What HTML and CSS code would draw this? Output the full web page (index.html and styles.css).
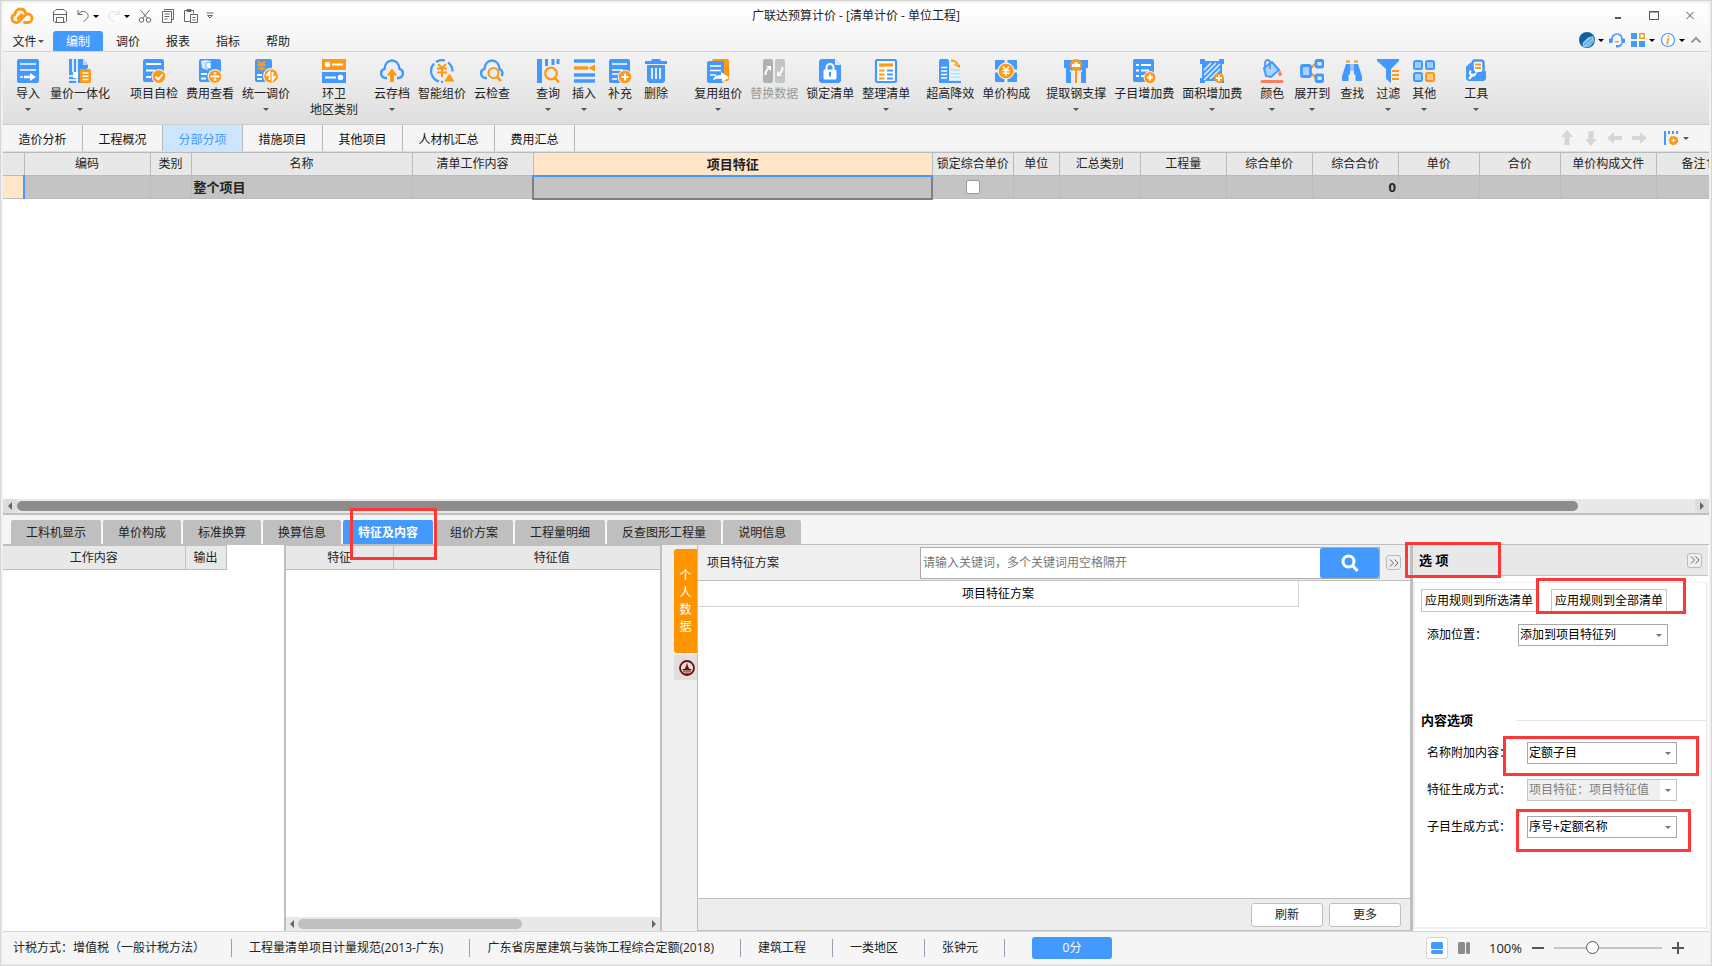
FILE: index.html
```html
<!DOCTYPE html>
<html lang="zh-CN">
<head>
<meta charset="utf-8">
<title>广联达预算计价 - [清单计价 - 单位工程]</title>
<link rel="stylesheet" href="styles.css">
</head>
<body>
<div class="window">
  <header class="top">
    <div class="titlebar">
      <div class="quick">
        <svg class="logo" viewBox="0 0 24 18"><path d="M15.500 5.500C14.500 3 12.500 2 10.500 2 7.500 2 5.200 4.200 5 7.300 3 7.800 2 9.300 2 11.200c0 2.500 1.700 4.300 4.200 4.300 1.600 0 2.500-.6 3.500-1.700l5-5.300c1-1 1.900-1.500 3.200-1.500 2.300 0 4.100 1.900 4.100 4.200s-1.800 4.300-4.300 4.300h-3.200M8 11.500l3.500-3.700" fill="none" stroke="#ff9913" stroke-width="2.900" stroke-linecap="round"/></svg>
        <button class="tool save" aria-label="保存"><svg viewBox="0 0 16 16"><path d="M4 1.500h8l2.500 2.500v9l-1.500 1.500H3L1.500 13V4zM2 6.500h12M4.500 14v-4.500h7V14"/></svg></button>
        <button class="tool undo" aria-label="撤销"><svg viewBox="0 0 16 16"><path d="M3 2v4.500h4.500M3 6.500C5 3.500 9 2.500 11.500 4.500s2 6-1 7.500l-2 1.500"/></svg><i class="caret dark"></i></button>
        <button class="tool redo" aria-label="重做"><svg viewBox="0 0 16 16"><path d="M13 2v4.500H8.500M13 6.500C11 3.500 7 2.500 4.500 4.500s-2 6 1 7.500l2 1.500"/></svg><i class="caret dark"></i></button>
        <button class="tool" aria-label="剪切"><svg viewBox="0 0 16 16"><path d="M3.500 2l7 8.500M12.500 2l-7 8.500"/><circle cx="4.500" cy="12" r="2.300"/><circle cx="11.500" cy="12" r="2.300"/></svg></button>
        <button class="tool" aria-label="复制"><svg viewBox="0 0 16 16"><path d="M4.500 2.500V1.500h9v10h-2M2.500 3.500h9v11h-9zM4.500 6h5M4.500 8.500h5M4.500 11h3"/></svg></button>
        <button class="tool" aria-label="粘贴"><svg viewBox="0 0 16 16"><path d="M7 13.500H1.500v-11h9v3M4 3.500v-2h4v2zM7.500 6.500h7v8h-7zM9.500 9.500h3M9.500 12h3"/></svg></button>
        <button class="tool more" aria-label="自定义"><svg viewBox="0 0 8 8"><path d="M.5 1h7M1.500 3.500h5L4 6z"/></svg></button>
      </div>
      <h1 class="title">广联达预算计价 - [清单计价 - 单位工程]</h1>
      <div class="winctl">
        <button aria-label="最小化"><svg viewBox="0 0 12 12"><path d="M3 8h6" stroke-width="2"/></svg></button>
        <button aria-label="最大化"><svg viewBox="0 0 12 12"><path d="M1.500 1.500h9v8h-9zM1.500 2h9"/></svg></button>
        <button aria-label="关闭"><svg viewBox="0 0 12 12"><path d="M2.500 2l7 7M9.500 2l-7 7"/></svg></button>
      </div>
    </div>
    <div class="menubar">
      <nav class="menus">
        <button>文件<i class="caret"></i></button>
        <button class="active">编制</button>
        <button>调价</button>
        <button>报表</button>
        <button>指标</button>
        <button>帮助</button>
      </nav>
      <div class="helpers">
        <button aria-label="账号"><svg viewBox="0 0 16 16"><circle cx="8" cy="8" r="8" fill="#12609c"/><path d="M4 14.500l-.5-3.500L9 5.500 14 4l1.500 5-4.500 5.500-4 1z" fill="#8fcbf0"/><path d="M5 13l8-7M8 14.500l6-6" stroke="#2a8bcc" stroke-width="1"/></svg><i class="caret dark"></i></button>
        <button aria-label="客服"><svg viewBox="0 0 16 16"><path d="M3 9V7a5 5 0 0 1 10 0v2M13 11c-.5 2-2 3.200-4 3.400" fill="none" stroke="#4499ff" stroke-width="1.700"/><path d="M1 6.500h2.500v4.500H2a2 2 0 0 1-1-4.500zM15 6.500h-2.500v4.500H14a2 2 0 0 0 1-4.500zM7 13h2.500v2.500H7z" fill="#4499ff"/><path d="M5.500 9c.8 2 4.200 2 5 0z" fill="#ff9913"/></svg></button>
        <button aria-label="应用"><svg viewBox="0 0 16 16"><path d="M1 1h6v6H1zM1 9h6v6H1zM9 9h6v6H9z" fill="#4499ff"/><path d="M9.800 1.800h4.400v4.400H9.800z" fill="#fff" stroke="#ff9913" stroke-width="1.400"/></svg><i class="caret dark"></i></button>
        <button aria-label="关于"><svg viewBox="0 0 16 16"><circle cx="8" cy="8" r="6.500" fill="#fff" stroke="#4499ff" stroke-width="1.200"/><path d="M8.800 3.500l-.3 1.500M7 7h1.200l-1 5h1.200" fill="none" stroke="#ff9913" stroke-width="1.600"/></svg><i class="caret dark"></i></button>
        <button aria-label="收起"><svg viewBox="0 0 12 16"><path d="M1.500 10.500L6 6l4.500 4.500" fill="none" stroke="#999" stroke-width="2"/></svg></button>
      </div>
    </div>
  </header>

  <div class="ribbon">
    <div class="group">
      <button class="cmd"><svg viewBox="0 0 24 24"><rect x="1" width="22" height="24" rx="2" fill="#4499ff"/><path d="M4 5h16M4 11h16M4 18h3" stroke="#fff" stroke-width="1.700"/><path d="M8 18h7" stroke="#fff" stroke-width="2.600"/><path d="M14 14l6 4-6 4z" fill="#fff"/></svg><span>导入</span><i class="caret"></i></button>
      <button class="cmd"><svg viewBox="0 0 24 24"><path d="M1 0h14l5 6v3H1zM1 9h18v15H1z" fill="#4499ff"/><path d="M15 0l5 6h-5z" fill="#b8dcff"/><path d="M5 0v13M9 0v13M1 17h5M9 14v10M1 21h9" stroke="#fff" stroke-width="1.600"/><path d="M5 13h5v6H5z" fill="#fff"/><rect x="12" y="10" width="11" height="14" rx="1.500" fill="#ff9913"/><path d="M14.500 14h6M14.500 17.300h6M14.500 20.600h6" stroke="#fff" stroke-width="1.500"/></svg><span>量价一体化</span><i class="caret"></i></button>
    </div>
    <div class="group gap-m">
      <button class="cmd"><svg viewBox="0 0 24 24"><rect x="1" width="21" height="23" rx="2" fill="#4499ff"/><path d="M4 5h15M4 11.500h9M4 18h5" stroke="#fff" stroke-width="1.800"/><circle cx="17" cy="17.500" r="7.500" fill="#eee"/><circle cx="17" cy="17.500" r="6.300" fill="#ff9913"/><path d="M13.500 17.500l2.700 2.700 4.500-4.700" fill="none" stroke="#fff" stroke-width="2"/></svg><span>项目自检</span></button>
      <button class="cmd"><svg viewBox="0 0 24 24"><rect x="1" width="22" height="23" rx="2" fill="#4499ff"/><path d="M3 2l5-1 5 1v7l-4 2-5-2z" fill="#d7ebff"/><path d="M8 4l5-1v7l-5-1z" fill="#f4faff" stroke="#4499ff" stroke-width=".7"/><path d="M3 15h6M3 19.500h5" stroke="#fff" stroke-width="1.800"/><circle cx="17" cy="17.500" r="7.500" fill="#eee"/><circle cx="17" cy="17.500" r="6.300" fill="#ff9913"/><path d="M12.500 17.500h9" stroke="#fff" stroke-width="1.800"/><circle cx="17" cy="14.300" r="1.400" fill="#fff"/><circle cx="17" cy="20.700" r="1.400" fill="#fff"/></svg><span>费用查看</span></button>
      <button class="cmd"><svg viewBox="0 0 24 24"><rect x="1" width="17" height="23" rx="2" fill="#4499ff"/><path d="M4 2l3.500 4L11 2M3.500 6h8M3.500 9.500h8M7.500 5v7" fill="none" stroke="#ff9913" stroke-width="1.900"/><path d="M3 16h5M3 20h5" stroke="#fff" stroke-width="1.800"/><circle cx="17" cy="17" r="8" fill="#eee"/><circle cx="17" cy="17" r="6.800" fill="#ff9913"/><path d="M12.500 17l3-4v8M18.500 13v8l3-4" fill="none" stroke="#fff" stroke-width="1.800"/></svg><span>统一调价</span><i class="caret"></i></button>
    </div>
    <div class="group gap-m">
      <button class="cmd"><svg viewBox="0 0 24 24"><path d="M0 0h24v11H0z" fill="#ff9913"/><path d="M0 13h24v11H0z" fill="#4499ff"/><path d="M10 5.500h11M3 18.500h11" stroke="#fff" stroke-width="1.800"/><circle cx="5.500" cy="5.500" r="2.700" fill="#fff"/><circle cx="18.500" cy="18.500" r="2.700" fill="#fff"/></svg><span>环卫<br>地区类别</span></button>
    </div>
    <div class="group gap-s">
      <button class="cmd"><svg viewBox="0 0 24 24"><path d="M7 19H5.500A4.700 4.700 0 0 1 4.500 9.800C5 5 8 1.500 12 1.500S19 5 19.500 9.800A4.700 4.700 0 0 1 18.500 19H17" fill="none" stroke="#4499ff" stroke-width="2.400"/><path d="M12 9.500l5.500 7H14V23h-4v-6.500H6.500z" fill="#ff9913"/></svg><span>云存档</span><i class="caret"></i></button>
      <button class="cmd"><svg viewBox="0 0 24 24"><path d="M9 22.500A11 11 0 0 1 4 4.500M6 3a11 11 0 0 1 9-1.500M18 3.500a11 11 0 0 1 4.500 9M11 23l2-.2" fill="none" stroke="#4499ff" stroke-width="2.200"/><path d="M8 5l4 4 4-4M7 9.500h10M7 13.500h10M12 9v9" fill="none" stroke="#ff9913" stroke-width="2"/><path d="M19.500 14.500l5 8H14z" fill="#ff9913"/></svg><span>智能组价</span></button>
      <button class="cmd"><svg viewBox="0 0 24 24"><path d="M7 19H5.500A4.700 4.700 0 0 1 4.500 9.800C5 5 8 1.500 12 1.500S19 5 19.500 9.800A4.700 4.700 0 0 1 21.500 17" fill="none" stroke="#4499ff" stroke-width="2.400"/><circle cx="13.500" cy="14" r="5" fill="none" stroke="#ff9913" stroke-width="2.200"/><path d="M17 18l4 4" stroke="#ff9913" stroke-width="2.600"/></svg><span>云检查</span></button>
    </div>
    <div class="group gap-l">
      <button class="cmd"><svg viewBox="0 0 24 24"><path d="M3.500 0v24" stroke="#4499ff" stroke-width="5"/><path d="M10.500 0v7M17 0v6M22 0v5" stroke="#4499ff" stroke-width="3"/><circle cx="15" cy="14.500" r="5.800" fill="none" stroke="#ff9913" stroke-width="2.200"/><path d="M19 19l4 4.500" stroke="#ff9913" stroke-width="2.600"/></svg><span>查询</span><i class="caret"></i></button>
      <button class="cmd"><svg viewBox="0 0 24 24"><path d="M2 2h21M2 16h21M2 22h21" stroke="#4499ff" stroke-width="3.400"/><path d="M2 9h14" stroke="#ff9913" stroke-width="3.400"/><path d="M23 5.500v7L16 9z" fill="#ff9913"/></svg><span>插入</span><i class="caret"></i></button>
      <button class="cmd"><svg viewBox="0 0 24 24"><rect x="1" width="21" height="24" rx="2" fill="#4499ff"/><path d="M4 5h15M4 11h11M4 15h6M4 20h5" stroke="#fff" stroke-width="1.600"/><circle cx="17" cy="18" r="7.300" fill="#eee"/><circle cx="17" cy="18" r="6.200" fill="#ff9913"/><path d="M13.500 18h7M17 14.500v7" stroke="#fff" stroke-width="2"/></svg><span>补充</span><i class="caret"></i></button>
      <button class="cmd"><svg viewBox="0 0 24 24"><path d="M1 2h6l1-2h8l1 2h6v3H1zM3 6h18v16l-2 2H5l-2-2z" fill="#4499ff"/><path d="M8 9v11M12 9v11M16 9v11" stroke="#fff" stroke-width="1.700"/></svg><span>删除</span></button>
    </div>
    <div class="group gap-l">
      <button class="cmd"><svg viewBox="0 0 24 24"><rect x="6" width="17" height="22" rx="2" fill="#ff9913"/><rect x="1" y="2" width="17" height="22" rx="2" fill="#4499ff"/><path d="M4 7h11M4 11.500h11M4 16h6" stroke="#fff" stroke-width="1.700"/><path d="M7 21c1-4 4-5 8-5v-3l8 5.500-7 4.500v-3c-4-.5-6 0-9 1z" fill="#fff"/></svg><span>复用组价</span><i class="caret"></i></button>
      <button class="cmd" disabled><svg viewBox="0 0 24 24"><rect x="1" width="10" height="24" rx="2" fill="#b0b0b0"/><rect x="13" width="10" height="24" rx="2" fill="#c4c4c4"/><path d="M3.500 16c0-3 .5-5 3-6.500M20.500 8c0 3-.5 5-3 6.500" fill="none" stroke="#fff" stroke-width="2"/><path d="M4 7h5v5zM20 17h-5v-5z" fill="#fff"/></svg><span>替换数据</span></button>
      <button class="cmd"><svg viewBox="0 0 24 24"><path d="M1 2l2-2h14l6 6v16l-2 2H3l-2-2z" fill="#4499ff"/><path d="M17 0l6 6h-6z" fill="#dbeeff"/><path d="M8.500 11V8.500a3.500 3.500 0 0 1 7 0V11" fill="none" stroke="#fff" stroke-width="2"/><rect x="5.500" y="10.500" width="13" height="10" rx="1.500" fill="#fff"/><path d="M12 13v4.500" stroke="#4499ff" stroke-width="2"/></svg><span>锁定清单</span></button>
      <button class="cmd"><svg viewBox="0 0 24 24"><rect x="2" y="1" width="20" height="22" rx="1.500" fill="#fff" stroke="#4499ff" stroke-width="2.200"/><path d="M5 6h14" stroke="#ff9913" stroke-width="3.200"/><path d="M5 11.500h5.500M5 15.500h5.500M5 19.500h5.500" stroke="#ff9913" stroke-width="1.900"/><path d="M13 11.500h6M13 15.500h6M13 19.500h6" stroke="#4499ff" stroke-width="1.900"/></svg><span>整理清单</span><i class="caret"></i></button>
    </div>
    <div class="group gap-s">
      <button class="cmd"><svg viewBox="0 0 24 24"><path d="M1 2l1-2h8l1 2v20h12v2H1z" fill="#4499ff"/><path d="M3 8.500h6M3 12h6M3 15.500h6M3 19h6" stroke="#fff" stroke-width="1.700"/><path d="M13 10h9v12h-9z" fill="#c7e3ff"/><path d="M13 13h9M13 16.500h9M13 20h9" stroke="#fff"/><path d="M13 1.500c3.500 0 5.500 1.500 6.500 4" fill="none" stroke="#ff9913" stroke-width="2.200"/><path d="M15 5.500h7V2v7z" fill="#ff9913"/></svg><span>超高降效</span><i class="caret"></i></button>
      <button class="cmd"><svg viewBox="0 0 24 24"><rect x="1" y="1" width="22" height="22" rx="1" fill="#4499ff"/><path d="M12 0v24M0 12h24" stroke="#eee" stroke-width="3"/><circle cx="12" cy="12" r="8.500" fill="#eee"/><circle cx="12" cy="12" r="7.300" fill="#ff9913"/><path d="M8.800 7.500L12 11l3.200-3.500M8.500 11.500h7M8.500 14.200h7M12 11v6" fill="none" stroke="#fff" stroke-width="1.500"/></svg><span>单价构成</span></button>
    </div>
    <div class="group gap-s">
      <button class="cmd"><svg viewBox="0 0 24 24"><path d="M0 1h24v8h-2v15h-5V13l-5-5-5 5v11H2V9H0z" fill="#4499ff"/><path d="M6 11l6 8 6-8" fill="none" stroke="#eee" stroke-width="1.500"/><path d="M12 10v14" stroke="#ff9913" stroke-width="2"/><circle cx="12" cy="6" r="6" fill="#ff9913"/><path d="M8 5h2l1-2h2l1 2h2v3H8z" fill="#fff"/></svg><span>提取钢支撑</span><i class="caret"></i></button>
      <button class="cmd"><svg viewBox="0 0 24 24"><rect x="1" width="21" height="23" rx="2" fill="#4499ff"/><path d="M4 6h3M9 6h10M4 11.500h3M9 11.500h8M4 17h3M9 17h3" stroke="#fff" stroke-width="1.800"/><circle cx="18" cy="18.500" r="6.500" fill="#eee"/><circle cx="18" cy="18.500" r="5.500" fill="#ff9913"/><path d="M15 18.500h6M18 15.500v6" stroke="#fff" stroke-width="2"/></svg><span>子目增加费</span></button>
      <button class="cmd"><svg viewBox="0 0 24 24"><path d="M2 2h20v20H2z" fill="#4499ff"/><path d="M0 0h5v5H0zM19 0h5v5h-5zM0 19h5v5H0zM19 19h5v5h-5z" fill="#4499ff"/><path d="M4 11l7-7M4 16L16 4M4 21L20 5M10 20l10-10" stroke="#d9ecff" stroke-width="1.700"/><circle cx="19" cy="19" r="5" fill="#ff9913"/><path d="M16 19h6M19 16v6" stroke="#fff" stroke-width="2"/></svg><span>面积增加费</span><i class="caret"></i></button>
    </div>
    <div class="group gap-s">
      <button class="cmd"><svg viewBox="0 0 24 24"><path d="M4 9l8-6 7 8-8 7-5-1z" fill="#a9d2ff" stroke="#4499ff" stroke-width="2"/><path d="M5 9V4c0-4 5-4 5 0v6" fill="none" stroke="#4499ff" stroke-width="1.800"/><path d="M20 11l2 4a2 2 0 1 1-4 0z" fill="#ff7f5c"/><path d="M2 22.500h20" stroke="#ff7f5c" stroke-width="3" stroke-linecap="round"/></svg><span>颜色</span><i class="caret"></i></button>
      <button class="cmd"><svg viewBox="0 0 24 24"><path d="M16 4l-5 5M16 19l-5-5" stroke="#ff9913" stroke-width="2"/><rect x="1.500" y="6.500" width="9" height="11" rx="1.500" fill="#a9d2ff" stroke="#4499ff" stroke-width="2.800"/><rect x="16" y="1.500" width="7" height="6.500" rx="1.500" fill="#d9ecff" stroke="#4499ff" stroke-width="2.800"/><rect x="16" y="16" width="7" height="6.500" rx="1.500" fill="#d9ecff" stroke="#4499ff" stroke-width="2.800"/></svg><span>展开到</span><i class="caret"></i></button>
      <button class="cmd"><svg viewBox="0 0 24 24"><path d="M6 2.500h4M14 2.500h4" stroke="#ff9913" stroke-width="2"/><path d="M6 5h4v10l-1.500 1v6H2v-5zM18 5h-4v10l1.500 1v6H22v-5zM10.500 5h1v7h-1zM12.500 5h1v7h-1z" fill="#4499ff"/></svg><span>查找</span></button>
      <button class="cmd"><svg viewBox="0 0 24 24"><path d="M1 0h22v2l-8 8v14l-5-4V10L1 2z" fill="#4499ff"/><path d="M15 10h9v14h-9z" fill="#eee"/><path d="M16 12h7M16 16h7M16 20h7" stroke="#ff9913" stroke-width="2"/></svg><span>过滤</span><i class="caret"></i></button>
      <button class="cmd"><svg viewBox="0 0 24 24"><g fill="#9dccff" stroke="#4499ff" stroke-width="2"><rect x="2" y="2" width="8" height="8" rx="1.500"/><rect x="14" y="2" width="8" height="8" rx="1.500"/><rect x="2" y="14" width="8" height="8" rx="1.500"/></g><rect x="14" y="14" width="8" height="8" rx="1.500" fill="#ffcb85" stroke="#ff9913" stroke-width="2"/></svg><span>其他</span><i class="caret"></i></button>
    </div>
    <div class="group gap-l">
      <button class="cmd"><svg viewBox="0 0 24 24"><path d="M2 8l4-4h4v10H2z" fill="#4499ff"/><rect x="8.500" y="1.500" width="11" height="16" rx="2.500" fill="#fff" stroke="#4499ff" stroke-width="2.500"/><path d="M11 5.500h6M11 9h6" stroke="#ff9913" stroke-width="2"/><path d="M2 9h7l3 5 2-1 8-1v8l-2 2H4l-2-2z" fill="#4499ff"/><path d="M5 20l4-5M7 11.500a2.800 2.800 0 1 0 4.500 2.500" fill="none" stroke="#fff" stroke-width="2.200"/></svg><span>工具</span><i class="caret"></i></button>
    </div>
  </div>

  <div class="docbar">
    <nav class="doctabs">
      <button>造价分析</button><button>工程概况</button><button class="active">分部分项</button><button>措施项目</button><button>其他项目</button><button>人材机汇总</button><button>费用汇总</button>
    </nav>
    <div class="doctools">
      <button aria-label="上移"><svg viewBox="0 0 16 16"><path d="M8 0l6 7h-3.500v8h-5V7H2z"/></svg></button>
      <button aria-label="下移"><svg viewBox="0 0 16 16"><path d="M8 16l6-7h-3.500V1h-5v8H2z"/></svg></button>
      <button aria-label="左移"><svg viewBox="0 0 16 16"><path d="M0 8l7-6v4h8v4H7v4z"/></svg></button>
      <button aria-label="右移"><svg viewBox="0 0 16 16"><path d="M16 8L9 2v4H1v4h8v4z"/></svg></button>
      <button class="colset" aria-label="列设置"><svg viewBox="0 0 16 16"><path d="M2 1v14M6 1v3M10 1v3M14 1v3" stroke="#4499ff" stroke-width="2"/><circle cx="10.500" cy="10.500" r="4" fill="#ff9913" stroke="#ff9913" stroke-width="1.500" stroke-dasharray="2 1"/><path d="M8.500 10.500h4M10.500 8.500v4" stroke="#fff"/></svg><i class="caret"></i></button>
    </div>
  </div>

  <main class="sheet">
    <div class="sheet-view">
      <table class="grid">
        <colgroup><col class="c-mark"><col class="c-code"><col class="c-type"><col class="c-name"><col class="c-work"><col class="c-feat"><col class="c-81"><col class="c-unit"><col class="c-81"><col class="c-86"><col class="c-86"><col class="c-86"><col class="c-81"><col class="c-81"><col class="c-file"><col class="c-81"></colgroup>
        <thead><tr><th></th><th>编码</th><th>类别</th><th>名称</th><th>清单工作内容</th><th class="current">项目特征</th><th>锁定综合单价</th><th>单位</th><th>汇总类别</th><th>工程量</th><th>综合单价</th><th>综合合价</th><th>单价</th><th>合价</th><th>单价构成文件</th><th>备注1</th></tr></thead>
        <tbody><tr><td class="marker"></td><td></td><td></td><td>整个项目</td><td></td><td class="cursor"></td><td class="mid"><input type="checkbox" aria-label="锁定综合单价"></td><td></td><td></td><td></td><td></td><td class="num">0</td><td></td><td></td><td></td><td></td></tr></tbody>
      </table>
    </div>
    <div class="hscroll main-scroll"><i class="arrow left"></i><span class="track"><span class="thumb"></span></span><i class="arrow right"></i></div>
  </main>

  <nav class="subtabs">
    <button>工料机显示</button><button>单价构成</button><button>标准换算</button><button>换算信息</button><button class="active">特征及内容<i class="mark mark-tab"></i></button><button>组价方案</button><button>工程量明细</button><button>反查图形工程量</button><button>说明信息</button>
  </nav>

  <section class="panels">
    <div class="pane work">
      <table class="mini"><colgroup><col class="m-work"><col class="m-out"></colgroup><thead><tr><th>工作内容</th><th>输出</th></tr></thead></table>
    </div>
    <div class="pane feature">
      <table class="mini wide"><colgroup><col class="m-feat"><col></colgroup><thead><tr><th>特征</th><th>特征值</th></tr></thead></table>
      <div class="hscroll"><i class="arrow left"></i><span class="track"><span class="thumb"></span></span><i class="arrow right"></i></div>
    </div>
    <div class="pane scheme">
      <div class="side">
        <button class="side-tab">个<br>人<br>数<br>据</button>
        <button class="side-icon" aria-label="企业数据"><svg viewBox="0 0 16 16"><circle cx="8" cy="8" r="7" fill="#e9dcd9" stroke="#6e1008" stroke-width="1.800"/><path d="M8 2.500l1 4 1.500 2.500h2l-.5 1.500H4L3.500 9h2L7 6.500z" fill="#6e1008"/><path d="M4 11.800h8M5.500 13.300h5" stroke="#8e3a30"/></svg></button>
      </div>
      <div class="scheme-body">
        <div class="scheme-head">
          <label for="kw">项目特征方案</label>
          <div class="search"><input id="kw" type="text" placeholder="请输入关键词，多个关键词用空格隔开"><button aria-label="搜索"><svg viewBox="0 0 18 18"><circle cx="7.500" cy="7.500" r="5.500"/><path d="M11.500 11.500L16.500 17"/></svg></button></div>
          <button class="fold" aria-label="折叠"><svg viewBox="0 0 10 10"><path d="M1 1.500L4.500 5 1 8.500M5.500 1.500L9 5 5.500 8.500"/></svg></button>
        </div>
        <div class="scheme-list"><div class="scheme-col">项目特征方案</div></div>
        <div class="scheme-foot"><button>刷新</button><button>更多</button></div>
      </div>
    </div>
    <aside class="pane options">
      <div class="opt-head"><h2>选 项</h2><i class="mark mark-head"></i><button class="fold" aria-label="折叠"><svg viewBox="0 0 10 10"><path d="M1 1.500L4.500 5 1 8.500M5.500 1.500L9 5 5.500 8.500"/></svg></button></div>
      <div class="opt-box">
        <div class="apply"><button>应用规则到所选清单</button><span class="anchor"><button>应用规则到全部清单</button><i class="mark mark-apply"></i></span></div>
        <div class="field place"><label for="pos">添加位置：</label><span class="pick"><select id="pos"><option>添加到项目特征列</option></select></span></div>
        <div class="legend"><h3>内容选项</h3><hr></div>
        <div class="field"><label for="n1">名称附加内容：</label><span class="pick"><select id="n1"><option>定额子目</option></select><i class="mark mark-name"></i></span></div>
        <div class="field"><label for="n2">特征生成方式：</label><span class="pick off"><select id="n2" disabled><option>项目特征：项目特征值</option></select></span></div>
        <div class="field"><label for="n3">子目生成方式：</label><span class="pick"><select id="n3"><option>序号+定额名称</option></select><i class="mark mark-item"></i></span></div>
      </div>
    </aside>
  </section>

  <footer class="status">
    <div class="facts"><span>计税方式：增值税（一般计税方法）</span><span>工程量清单项目计量规范(2013-广东)</span><span>广东省房屋建筑与装饰工程综合定额(2018)</span><span>建筑工程</span><span>一类地区</span><span>张钟元</span><button class="score">0分</button></div>
    <div class="zoom">
      <div class="views">
        <button class="view on" aria-label="上下布局"><svg viewBox="0 0 12 12"><rect width="12" height="7" rx="1.500" fill="#4499ff"/><rect y="8" width="12" height="4" rx="1.500" fill="#4499ff"/></svg></button>
        <button class="view" aria-label="左右布局"><svg viewBox="0 0 12 12"><rect width="7" height="12" rx="1.500" fill="#8c8c8c"/><rect x="8" width="4" height="12" rx="1.500" fill="#8c8c8c"/></svg></button>
      </div>
      <label for="zoom">100%</label>
      <button class="step" aria-label="缩小"><svg viewBox="0 0 12 12"><path d="M0 6h12"/></svg></button>
      <input id="zoom" type="range" min="0" max="100" value="34">
      <button class="step" aria-label="放大"><svg viewBox="0 0 12 12"><path d="M0 6h12M6 0v12"/></svg></button>
    </div>
  </footer>
</div>
</body>
</html>
```
FILE: styles.css
```css
* { box-sizing: border-box; }
body { margin: 0; background: #f0f0f0; }
body, button, input, select {
  font-family: "Open Sans", "Noto Sans CJK SC", sans-serif;
  font-size: 12px;
  line-height: 16px;
  color: #222;
}
button { border: 0; padding: 0; background: none; white-space: nowrap; }
h1, h2, h3 { margin: 0; font-size: 12px; font-weight: 400; }
svg { display: block; flex: none; }

.window {
  display: flex;
  flex-direction: column;
  min-height: 100vh;
  padding: 2px;
  border: 1px solid #d6d6d6;
  background: #f0f0f0;
  overflow: hidden;
}
.caret {
  width: 0; height: 0;
  border: 3px solid transparent;
  border-top-color: #555;
  border-bottom: 0;
}
.caret.dark { border-top-color: #000; }

/* Title bar and menus */
.top { background: linear-gradient(#fff, #f3f3f3); border-bottom: 1px solid #d4d4d4; }
.titlebar { display: grid; grid-template-columns: 1fr auto 1fr; align-items: center; height: 26px; }
.quick { display: flex; align-items: center; gap: 7px; padding-left: 7px; }
.logo { width: 24px; height: 18px; margin-right: 11px; }
.tool { display: flex; align-items: center; gap: 2px; }
.tool svg { width: 16px; height: 16px; fill: none; stroke: #666; }
.tool.redo svg { stroke: #ddd; }
.tool.more svg { width: 8px; height: 8px; }
.winctl { display: flex; justify-content: flex-end; gap: 24px; padding-right: 13px; }
.winctl svg { width: 12px; height: 12px; fill: none; stroke: #555; stroke-width: 1; }
.menubar { display: flex; justify-content: space-between; align-items: flex-end; height: 22px; }
.menus { display: flex; }
.menus button { display: flex; align-items: center; justify-content: center; gap: 1px; width: 50px; height: 20px; padding-top: 1px; }
.menus .active { background: #4499ff; color: #fff; border-radius: 3px 3px 0 0; }
.helpers { display: flex; align-items: center; gap: 5px; height: 22px; padding-right: 7px; }
.helpers button { display: flex; align-items: center; gap: 3px; }
.helpers svg { height: 16px; }

/* Ribbon */
.ribbon {
  display: flex;
  min-height: 73px;
  padding: 7px 0 0 11px;
  background: linear-gradient(#f3f3f3, #dedede);
  border-bottom: 1px solid #ccc;
}
.group { display: flex; align-items: flex-start; gap: 8px; }
.gap-s { margin-left: 16px; }
.gap-m { margin-left: 20px; }
.gap-l { margin-left: 24px; }
.cmd { display: flex; flex-direction: column; align-items: center; min-width: 28px; }
.cmd svg { width: 24px; height: 24px; margin-bottom: 3px; }
.cmd .caret { margin-top: 6px; }
.cmd:disabled { color: #999; }

/* Document tabs */
.docbar { display: flex; justify-content: space-between; background: #f5f5f5; height: 27px; border-bottom: 1px solid #ddd; }
.doctabs { display: flex; }
.doctabs button { padding: 3px 0 0; border-right: 1px solid #b8b8b8; width: 80px; flex: none; color: #111; }
.doctabs button:nth-child(6) { width: 92px; }
.doctabs .active { background: #cce6ff; color: #4499ff; }
.doctools { display: flex; align-items: center; gap: 8px; padding-right: 20px; }
.doctools svg { width: 16px; height: 16px; fill: #d6d6d6; }
.colset { display: flex; align-items: center; gap: 4px; margin-left: 8px; }

/* Main grid */
.sheet { flex: 1 0 auto; display: flex; flex-direction: column; min-width: 0; background: #fff; border-bottom: 2px solid #c0c0c0; }
.sheet-view { flex: 1; overflow: hidden; }
.grid { width: 1735px; table-layout: fixed; border-collapse: collapse; border-top: 1px solid #bbb; }
.c-mark { width: 21px; } .c-code { width: 126px; } .c-type { width: 41px; } .c-name { width: 221px; }
.c-work { width: 121px; } .c-feat { width: 399px; } .c-unit { width: 46px; } .c-file { width: 96px; }
.c-81 { width: 81px; } .c-86 { width: 86px; }
.grid th { height: 23px; padding: 0; background: #e8e8e8; border: 1px solid #bbb; border-left: 0; font-weight: 400; white-space: nowrap; }
.grid th.current { background: #ffe6c8; font-weight: 700; font-size: 13px; border-bottom: 2px solid #4499ff; }
.grid td { height: 23px; padding: 0 2px; background: #c4c4c4; border: 1px solid #bcbcbc; border-left: 0; font-weight: 700; font-size: 13px; }
.grid td.marker { background: #ffe6c8; border-right: 2px solid #4499ff; }
.grid td.cursor { border: 2px solid #808080; border-top: 2px solid #4499ff; }
.grid td.mid { text-align: center; }
.grid td.num { text-align: right; }
.grid input { appearance: none; display: block; width: 14px; height: 14px; margin: 0 auto; background: #fff; border: 1px solid #999; border-radius: 2px; }

.hscroll { display: flex; align-items: center; height: 14px; background: #e8e8e8; }
.track { flex: 1; }
.thumb { display: block; width: 64%; height: 10px; border-radius: 5px; background: #bfbfbf; }
.main-scroll .thumb { width: 93%; background: #8c8c8c; }
.arrow { width: 12px; height: 14px; display: flex; align-items: center; justify-content: center; }
.main-scroll .arrow { width: 14px; background: #ddd; }
.arrow::before { content: ""; border: 4px solid transparent; }
.arrow.left::before { border-right: 4px solid #666; border-left: 0; }
.arrow.right::before { border-left: 4px solid #666; border-right: 0; }

/* Detail tabs */
.subtabs { display: flex; gap: 2px; padding: 5px 8px 0; background: #f5f5f5; border-bottom: 1px solid #bfbfbf; }
.subtabs button { position: relative; height: 24px; padding: 1px 15px 0; background: #bfbfbf; border-radius: 2px 2px 0 0; }
.subtabs .active { background: #4499ff; color: #fff; font-weight: 700; }

/* Detail panels */
.panels { display: flex; min-height: 386px; background: #fff; }
.pane { display: flex; flex-direction: column; border-right: 2px solid #bfbfbf; }
.work { width: 283px; align-items: flex-start; }
.feature { width: 376px; justify-content: space-between; }
.mini { table-layout: fixed; border-collapse: collapse; width: 223px; }
.mini.wide { width: 100%; }
.m-work { width: 182px; } .m-out { width: 41px; } .m-feat { width: 107px; }
.mini th { height: 24px; padding: 0; background: #e8e8e8; border: 1px solid #bfbfbf; border-width: 1px 1px 1px 0; font-weight: 400; }
.wide th:last-child { border-right: 0; padding-left: 50px; }

.scheme { flex: 1; flex-direction: row; background: #efefef; min-width: 0; border-right-width: 3px; }
.side { width: 35px; padding: 4px 0 0 12px; }
.side-tab { width: 23px; height: 104px; background: #ff9400; color: #fff; line-height: 17px; border-radius: 3px 0 0 3px; }
.side-icon { display: flex; align-items: center; justify-content: flex-end; width: 23px; height: 25px; margin-top: 2px; padding-right: 2px; background: #e0e0e0; border-radius: 2px 0 0 2px; }
.side-icon svg { width: 16px; height: 16px; }
.scheme-body { flex: 1; display: flex; flex-direction: column; border-left: 1px solid #bfbfbf; min-width: 0; }
.scheme-head { display: flex; align-items: center; height: 36px; padding: 0 9px; border-bottom: 1px solid #bfbfbf; }
.scheme-head label { flex: 1; }
.search { display: flex; width: 460px; height: 32px; border: 1px solid #aaa; background: #fff; margin-right: 6px; }
.search input { flex: 1; min-width: 0; border: 0; padding: 0 2px; background: none; outline: 0; }
.search input::placeholder { color: #777; opacity: 1; }
.search button { display: flex; align-items: center; justify-content: center; width: 59px; background: #4499ff; border-radius: 2px; }
.search svg { width: 18px; height: 18px; fill: none; stroke: #fff; stroke-width: 3; }
.fold { display: flex; align-items: center; justify-content: center; width: 15px; height: 15px; border: 1px solid #bbb; border-radius: 3px; background: #eee; }
.fold svg { width: 10px; height: 10px; fill: none; stroke: #666; stroke-width: 1; }
.scheme-list { flex: 1; background: #fff; }
.scheme-col { width: 601px; height: 26px; line-height: 26px; text-align: center; color: #000; border: 1px solid #d4d4d4; border-width: 0 1px 1px 0; }
.scheme-foot { display: flex; justify-content: flex-end; gap: 6px; padding: 4px 9px 3px; background: #ededed; border: 1px solid #bfbfbf; border-width: 1px 0; }
.scheme-foot button { width: 72px; height: 24px; background: #fff; border: 1px solid #bfbfbf; border-radius: 3px; }

.options { width: 296px; border-right: 0; padding: 0 1px 0 0; color: #000; }
.opt-head { position: relative; display: flex; align-items: center; justify-content: space-between; height: 31px; padding: 0 6px; background: #e8e8e8; border-bottom: 1px solid #c4c4c4; }
.opt-head h2 { font-size: 13px; font-weight: 700; }
.opt-box { flex: 1; margin: 6px 0 2px; padding: 6px 0 0 6px; border: 2px solid #f0f0f0; border-width: 1px 2px 2px; }
.apply { display: flex; gap: 14px; }
.apply button { width: 116px; height: 23px; background: #fff; border: 1px solid #c4c4c4; color: #000; }
.anchor, .pick { position: relative; display: flex; }
.field { display: flex; align-items: center; height: 22px; margin-bottom: 15px; padding-left: 6px; }
.field label { width: 100px; }
.place { margin-top: 12px; margin-bottom: 66px; }
.place label { width: 91px; }
.pick select { appearance: none; width: 150px; height: 22px; padding: 0 1px; background: #fff; border: 1px solid #a8a8a8; border-radius: 0; color: #000; opacity: 1; }
.pick::after { content: ""; position: absolute; right: 6px; top: 10px; border: 3px solid transparent; border-top-color: #777; border-bottom: 0; }
.pick.off select { color: #808080; border-color: #c4c4c4; background: linear-gradient(90deg, #efefef 132px, #fff 132px); }
.legend { display: flex; align-items: center; gap: 43px; margin-bottom: 14px; }
.legend h3 { font-size: 13px; font-weight: 700; }
.legend hr { flex: 1; margin: 0; border: 0; border-top: 1px solid #e6e6e6; }

/* Red callout frames lie over the controls they point at */
.mark { position: absolute; z-index: 2; border: 3px solid #ff3737; pointer-events: none; }
.mark-tab { left: 7px; right: -4px; top: -12px; bottom: -16px; }
.mark-head { left: -8px; top: -3px; width: 96px; height: 36px; }
.mark-apply { left: -15px; right: -19px; top: -11px; bottom: -2px; }
.mark-name { left: -24px; right: -22px; top: -6px; bottom: -12px; }
.mark-item { left: -11px; right: -14px; top: -7px; bottom: -14px; }

/* Status bar */
.status { display: flex; justify-content: space-between; align-items: center; height: 32px; background: #f5f5f5; border-top: 1px solid #d4d4d4; padding: 0 25px 0 10px; }
.facts, .zoom, .views { display: flex; align-items: center; white-space: nowrap; }
.facts span { height: 18px; padding-right: 26px; margin-right: 17px; border-right: 1px solid #98a2b3; line-height: 18px; }
.score { width: 80px; height: 22px; margin-left: 10px; background: #4499ff; color: #fff; border-radius: 3px; }
.zoom { gap: 10px; }
.views { gap: 5px; }
.view { display: flex; align-items: center; justify-content: center; width: 22px; height: 22px; border: 1px solid transparent; border-radius: 3px; }
.view.on { background: #fff; border-color: #d4d4d4; }
.view svg, .step svg { width: 12px; height: 12px; }
.zoom label { margin-left: 4px; font-size: 13px; }
.step svg { stroke: #555; stroke-width: 2; }
.zoom input { appearance: none; width: 108px; height: 12px; margin: 0; background: linear-gradient(#c4c4c4, #c4c4c4) center / 100% 2px no-repeat; }
.zoom input::-webkit-slider-thumb { appearance: none; width: 13px; height: 13px; border: 1px solid #555; border-radius: 50%; background: #fff; }
```
